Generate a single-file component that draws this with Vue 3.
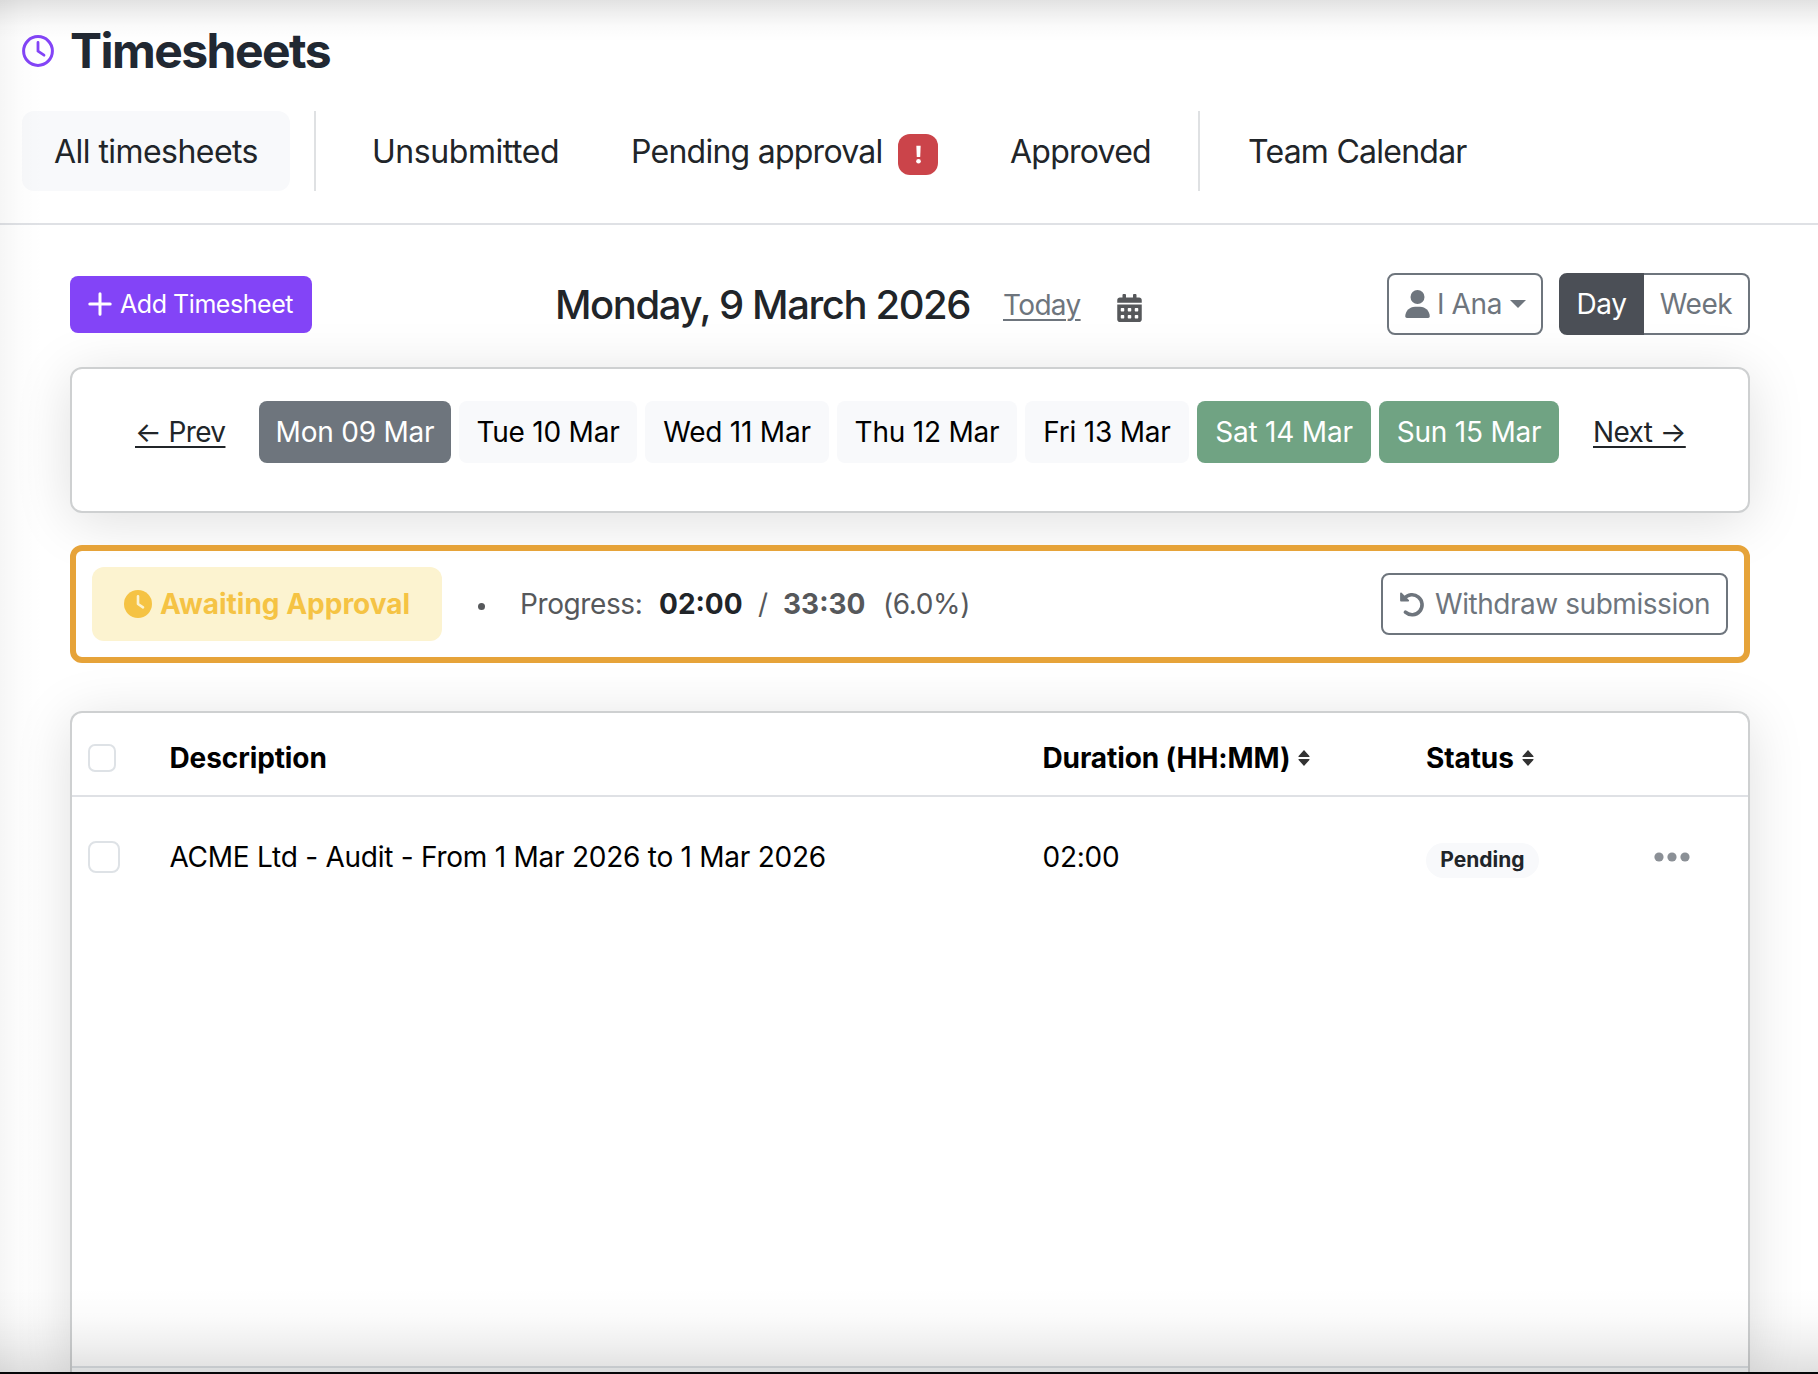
<script setup>
import { reactive } from 'vue'

const state = reactive({
  view: 'Day',
  active: 'Mon 09 Mar',
  days: [
    { label: 'Mon 09 Mar' },
    { label: 'Tue 10 Mar' },
    { label: 'Wed 11 Mar' },
    { label: 'Thu 12 Mar' },
    { label: 'Fri 13 Mar' },
    { label: 'Sat 14 Mar', weekend: true },
    { label: 'Sun 15 Mar', weekend: true }
  ],
  rows: [
    { description: 'ACME Ltd - Audit - From 1 Mar 2026 to 1 Mar 2026', duration: '02:00', status: 'Pending' }
  ]
})
</script>

<template>
  <div class="page">
    <header class="header">
      <div class="brand">
        <svg class="brandIcon" viewBox="0 0 32 32" fill="none" stroke="#8344f7" stroke-width="3">
          <circle cx="16" cy="16" r="14.4" />
          <path d="M16 7.4V16.2L22 20.2" stroke-width="2.8" stroke-linecap="round" stroke-linejoin="round" />
        </svg>
        <h1>Timesheets</h1>
      </div>
      <nav class="tabs">
        <a class="tab all">All timesheets</a>
        <span class="separator"></span>
        <a class="tab unsubmitted">Unsubmitted</a>
        <a class="tab pendingTab">Pending approval
          <span class="alertBadge">
            <svg viewBox="0 0 8 22" fill="#fff"><path d="M1.5 .8h5L6 14H2z" /><circle cx="4" cy="18.8" r="2.7" /></svg>
          </span>
        </a>
        <a class="tab approved">Approved</a>
        <span class="separator"></span>
        <a class="tab team">Team Calendar</a>
      </nav>
    </header>

    <main class="content">
      <div class="toolbar">
        <button class="add">
          <svg viewBox="0 0 24 24" stroke="#fff" stroke-width="3" stroke-linecap="round"><path d="M12 1.8v20.4M1.8 12h20.4" /></svg>
          <span>Add Timesheet</span>
        </button>
        <div class="date">
          <h2>Monday, 9 March 2026</h2>
          <a class="today">Today</a>
          <svg class="calendar" viewBox="0 0 448 512" fill="#56585b">
            <path fill-rule="evenodd" d="M0 464c0 26.500 21.500 48 48 48h352c26.500 0 48-21.500 48-48V192H0zM320 268c0-6.600 5.400-12 12-12h40c6.600 0 12 5.400 12 12v40c0 6.600-5.400 12-12 12h-40c-6.600 0-12-5.400-12-12zm0 128c0-6.600 5.400-12 12-12h40c6.600 0 12 5.400 12 12v40c0 6.600-5.400 12-12 12h-40c-6.600 0-12-5.400-12-12zM192 268c0-6.600 5.400-12 12-12h40c6.600 0 12 5.400 12 12v40c0 6.600-5.400 12-12 12h-40c-6.600 0-12-5.400-12-12zm0 128c0-6.600 5.400-12 12-12h40c6.600 0 12 5.400 12 12v40c0 6.600-5.400 12-12 12h-40c-6.600 0-12-5.400-12-12zM64 268c0-6.600 5.400-12 12-12h40c6.600 0 12 5.400 12 12v40c0 6.600-5.400 12-12 12H76c-6.600 0-12-5.400-12-12zm0 128c0-6.600 5.400-12 12-12h40c6.600 0 12 5.400 12 12v40c0 6.600-5.400 12-12 12H76c-6.600 0-12-5.400-12-12z" />
            <path d="M400 64h-48V16c0-8.800-7.200-16-16-16h-32c-8.800 0-16 7.200-16 16v48H160V16c0-8.800-7.200-16-16-16h-32c-8.800 0-16 7.200-16 16v48H48C21.500 64 0 85.500 0 112v48h448v-48c0-26.500-21.500-48-48-48z" />
          </svg>
        </div>
        <div class="controls">
          <button class="user">
            <svg class="userIcon" viewBox="0 0 448 512" fill="#6e757d">
              <circle cx="224" cy="128" r="128" />
              <path d="M178 304C80 304 0 384 0 482c0 17 13 30 30 30h388c17 0 30-13 30-30 0-98-80-178-178-178z" />
            </svg>
            <span>I Ana</span>
            <i class="caret"></i>
          </button>
          <div class="switch">
            <button class="day" :class="{ on: state.view === 'Day' }" @click="state.view = 'Day'">Day</button>
            <button class="week" :class="{ on: state.view === 'Week' }" @click="state.view = 'Week'">Week</button>
          </div>
        </div>
      </div>

      <section class="card strip">
        <a class="prev">← Prev</a>
        <div class="days">
          <button
            v-for="day in state.days"
            :key="day.label"
            class="dayItem"
            :class="{ weekend: day.weekend, active: day.label === state.active }"
            @click="state.active = day.label"
          >{{ day.label }}</button>
        </div>
        <a class="next">Next →</a>
      </section>

      <section class="approval">
        <div class="awaiting">
          <svg viewBox="0 0 28 28"><circle cx="14" cy="14" r="14" fill="#f5c344" /><path d="M14 6.300V14l5 3.300" fill="none" stroke="#fcf3d0" stroke-width="2.600" stroke-linecap="round" stroke-linejoin="round" /></svg>
          <span>Awaiting Approval</span>
        </div>
        <i class="dot"></i>
        <div class="progress">
          <span class="progressLabel">Progress:</span>
          <b class="done">02:00</b>
          <span class="slash">/</span>
          <b class="total">33:30</b>
          <span class="percent">(6.0%)</span>
        </div>
        <button class="withdraw">
          <svg viewBox="0 0 26 26" fill="none" stroke="#6e757d" stroke-width="3.600" stroke-linecap="round" stroke-linejoin="round">
            <path d="M5.200 7.600A10 10 0 1 1 6.400 21.200" />
            <path d="M2 2.400V9.600H9.200L2 2.400z" fill="#6e757d" stroke-width="1.800" />
          </svg>
          <span>Withdraw submission</span>
        </button>
      </section>

      <section class="card table">
        <div class="row head">
          <i class="check small"></i>
          <span class="headDescription">Description</span>
          <span class="sortable headDuration">Duration (HH:MM)
            <svg viewBox="0 0 12 16" fill="#333"><path d="M6 0l5.600 6.300q.2 .7-.6 .7H1q-.8 0-.6-.7zM6 16L.4 9.700Q.2 9 1 9h10q.8 0 .6 .7z" /></svg>
          </span>
          <span class="sortable headStatus">Status
            <svg viewBox="0 0 12 16" fill="#333"><path d="M6 0l5.600 6.300q.2 .7-.6 .7H1q-.8 0-.6-.7zM6 16L.4 9.700Q.2 9 1 9h10q.8 0 .6 .7z" /></svg>
          </span>
        </div>
        <div v-for="row in state.rows" :key="row.description" class="row">
          <i class="check"></i>
          <span class="description">{{ row.description }}</span>
          <span class="duration">{{ row.duration }}</span>
          <span><em class="pill">{{ row.status }}</em></span>
          <svg class="more" viewBox="0 0 36 10" fill="#8b9096"><circle cx="5" cy="5" r="4.600" /><circle cx="18" cy="5" r="4.600" /><circle cx="31" cy="5" r="4.600" /></svg>
        </div>
        <div class="tableFoot"></div>
      </section>
    </main>
    <div class="edges"></div>
  </div>
</template>

<style>
body {
  margin: 0;
  background-color: #fff;
}
</style>

<style scoped>
.page {
  position: relative;
  display: flex;
  flex-direction: column;
  box-sizing: border-box;
  height: 1374px;
  overflow: hidden;
  border-bottom: 2px solid #050608;
  background-color: #fff;
  color: #212529;
  font-family: Inter, "Liberation Sans", sans-serif;
  font-size: 28px;
  line-height: 42px;
  white-space: nowrap;
}

.page * {
  box-sizing: border-box;
}

svg {
  display: block;
  flex: none;
}

button {
  display: flex;
  align-items: center;
  margin: 0;
  padding: 0;
  border: none;
  background: none;
  color: inherit;
  font: inherit;
  letter-spacing: inherit;
  cursor: pointer;
}

.header {
  flex: none;
  height: 225px;
  padding: 21px 22px 0;
  border-bottom: 2px solid #dfe1e5;
}

.brand {
  display: flex;
  align-items: center;
  gap: 16px;
  height: 60px;
}

.brandIcon {
  width: 32px;
  height: 32px;
}

h1, h2 {
  margin: 0;
}

h1 {
  color: #212832;
  font-size: 48px;
  line-height: 60px;
  font-weight: 700;
  letter-spacing: -1.55px;
}

.tabs {
  display: flex;
  height: 80px;
  margin-top: 30px;
  font-size: 32px;
}

.tab {
  display: flex;
  align-items: center;
  padding-top: 2px;
  letter-spacing: -0.75px;
  cursor: pointer;
}

.tab.all {
  width: 268px;
  padding-left: 32px;
  border-radius: 12px;
  background-color: #f8f9fb;
  letter-spacing: -0.55px;
}

.separator {
  width: 2px;
  margin-left: 24px;
  background-color: #dfe1e3;
}

.tab.unsubmitted {
  width: 259px;
  padding-left: 56px;
  letter-spacing: -0.45px;
}

.pendingTab {
  width: 379px;
  padding-left: 56px;
  justify-content: space-between;
  padding-right: 16px;
}

.alertBadge {
  display: flex;
  align-items: center;
  justify-content: center;
  width: 40px;
  height: 41px;
  margin-top: 4px;
  border-radius: 12px;
  background-color: #cb444a;
}

.alertBadge svg {
  width: 7px;
  height: 19px;
}

.approved {
  width: 220px;
  padding-left: 56px;
}

.team {
  padding-left: 48px;
}

.content {
  display: flex;
  flex-direction: column;
  flex: 1;
  padding: 48px 68px 0 70px;
}

.toolbar {
  position: relative;
  z-index: 1;
  display: flex;
  align-items: center;
  height: 62px;
}

.add {
  gap: 8px;
  width: 242px;
  height: 57px;
  padding-left: 18px;
  border-radius: 8px;
  background-color: #8344f7;
  color: #fff;
  font-size: 25px;
  letter-spacing: -0.45px;
}

.add svg {
  width: 24px;
  height: 24px;
}

.date {
  display: flex;
  align-items: center;
  width: 830px;
  margin-left: 243px;
}

h2 {
  width: 448px;
  padding-top: 2px;
  font-size: 40px;
  line-height: 48px;
  font-weight: 500;
  letter-spacing: -1.4px;
}

.today {
  width: 114px;
  padding-top: 1px;
  color: #6e757d;
  letter-spacing: -0.65px;
  text-decoration: underline;
  text-underline-offset: 4px;
  text-decoration-thickness: 2px;
}

.calendar {
  width: 25px;
  height: 28px;
  margin-top: 8px;
}

.controls {
  display: flex;
  gap: 16px;
  margin-left: auto;
  color: #6e757d;
  letter-spacing: -0.4px;
}

.user {
  width: 156px;
  height: 62px;
  padding-left: 16px;
  border: 2px solid #6e757d;
  border-radius: 8px;
}

.userIcon {
  width: 25px;
  height: 28px;
  margin-right: 7px;
}

.caret {
  margin-left: 8px;
  border: 8px solid transparent;
  border-top-color: #6e757d;
  border-bottom: none;
}

.switch {
  display: flex;
  width: 191px;
  height: 62px;
}

.switch button {
  justify-content: center;
  border: 2px solid #6e757d;
}

.day {
  width: 85px;
  border-radius: 8px 0 0 8px;
}

.week {
  width: 106px;
  border-radius: 0 8px 8px 0;
}

.switch .week {
  border-left: none;
}

.switch .on {
  border-color: #4b4f56;
  background-color: #4b4f56;
  color: #fff;
}

.card {
  border: 2px solid #ced0d1;
  border-radius: 12px;
  background-color: #fff;
  box-shadow: 0 8px 56px rgba(0, 0, 0, 0.13);
}

.strip {
  display: flex;
  flex: none;
  height: 146px;
  margin-top: 32px;
  padding: 32px 0 0 63px;
}

.prev, .next {
  line-height: 62px;
  letter-spacing: -0.6px;
  text-decoration: underline;
  text-decoration-thickness: 2px;
  text-underline-offset: 4px;
  cursor: pointer;
}

.prev {
  width: 124px;
}

.next {
  margin-left: 34px;
}

.days {
  display: grid;
  grid-template-columns: 192px 178px 184px 180px 164px 174px 180px;
  gap: 8px;
  height: 62px;
}

.dayItem {
  justify-content: center;
  border-radius: 8px;
  background-color: #f8f9fb;
  color: #000;
  letter-spacing: -0.22px;
}

.dayItem.weekend {
  background-color: #70a383;
  color: #fff;
}

.dayItem.active {
  background-color: #6e757d;
  color: #fff;
}

.approval {
  position: relative;
  display: flex;
  flex: none;
  align-items: center;
  height: 118px;
  margin-top: 32px;
  padding: 0 16px;
  border: 6px solid #e6a339;
  border-radius: 12px;
  background-color: rgba(255, 255, 255, 0.75);
}

.awaiting {
  display: flex;
  align-items: center;
  gap: 8px;
  width: 350px;
  height: 74px;
  padding-left: 32px;
  border-radius: 12px;
  background-color: #fcf3d0;
  color: #f5c344;
  font-weight: 700;
}

.awaiting svg {
  width: 28px;
  height: 28px;
}

.dot {
  width: 7px;
  height: 7px;
  margin: 5px 35px 0 36px;
  border-radius: 50%;
  background-color: #56585b;
}

.progress {
  display: flex;
  color: #56585b;
}

.progressLabel {
  width: 139px;
  letter-spacing: -0.4px;
}

.done {
  width: 99px;
  color: #212529;
}

.slash {
  width: 25px;
}

.total {
  width: 100px;
}

.percent {
  letter-spacing: -0.4px;
}

.withdraw {
  gap: 10px;
  width: 347px;
  height: 62px;
  margin-left: auto;
  padding-left: 16px;
  border: 2px solid #6e757d;
  border-radius: 8px;
  background-color: #fff;
  color: #6e757d;
  letter-spacing: -0.45px;
}

.withdraw svg {
  width: 26px;
  height: 26px;
}

.table {
  display: flex;
  flex-direction: column;
  flex: 1;
  margin-top: 48px;
  border-bottom: none;
  border-radius: 12px 12px 0 0;
  color: #000;
}

.row {
  display: grid;
  grid-template-columns: 97.5px 873px 383.5px 228px 36px;
  align-items: center;
  height: 120px;
}

.row > .check {
  margin-left: 16px;
}

.row.head {
  height: 84px;
  padding-top: 10px;
  padding-bottom: 2px;
  border-bottom: 2px solid #dfe1e5;
  font-weight: 700;
}

.check {
  width: 32px;
  height: 32px;
  border: 2px solid #dee2e6;
  border-radius: 8px;
}

.check.small {
  width: 28px;
  height: 28px;
  border-radius: 7px;
}

.headDescription, .sortable {
  letter-spacing: -0.1px;
}

.description, .duration {
  letter-spacing: -0.25px;
}

.sortable {
  display: flex;
  align-items: center;
  gap: 8px;
}

.sortable svg {
  width: 12px;
  height: 16px;
}

.pill {
  display: block;
  width: 113px;
  height: 35px;
  margin-top: 6px;
  border-radius: 18px;
  background-color: #f8f9fb;
  color: #212529;
  font-size: 21px;
  font-style: normal;
  font-weight: 700;
  line-height: 34px;
  text-align: center;
}

.more {
  width: 36px;
  height: 10px;
}

.tableFoot {
  height: 6px;
  margin-top: auto;
  border-top: 2px solid #dee2e6;
  background-color: #f8fafb;
}

/* soft shading along the window edges */
.edges {
  position: absolute;
  inset: 0;
  z-index: 2;
  background:
    linear-gradient(to bottom, rgba(0, 0, 0, 0.115), rgba(0, 0, 0, 0.06) 14px, rgba(0, 0, 0, 0.018) 26px, transparent 42px),
    linear-gradient(to top, rgba(0, 0, 0, 0.12), rgba(0, 0, 0, 0.06) 28px, rgba(0, 0, 0, 0.015) 56px, transparent 84px),
    linear-gradient(to right, rgba(0, 0, 0, 0.035), rgba(0, 0, 0, 0.01) 20px, transparent 44px);
  pointer-events: none;
}
</style>
